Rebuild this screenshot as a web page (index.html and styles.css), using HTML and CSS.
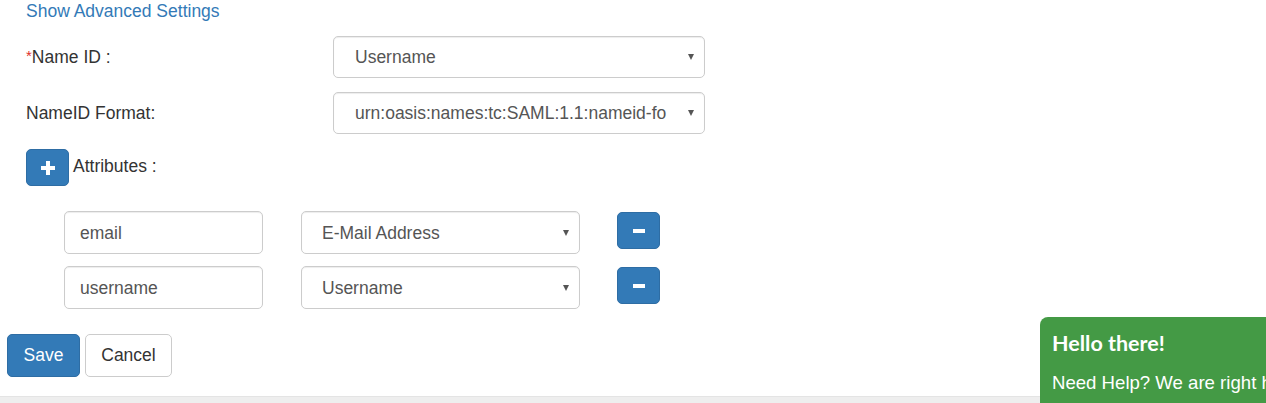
FILE: index.html
```html
<!DOCTYPE html>
<html>
<head>
<meta charset="utf-8">
<link rel="stylesheet" href="styles.css">
</head>
<body>
<div class="page">
  <div class="advanced"><a href="#">Show Advanced Settings</a></div>

  <div class="form-row first">
    <label class="label"><span class="req">*</span>Name ID :</label>
    <div class="select-wrap wide">
      <select class="select"><option>Username</option></select>
    </div>
  </div>

  <div class="form-row second">
    <label class="label">NameID Format:</label>
    <div class="select-wrap wide">
      <select class="select"><option>urn:oasis:names:tc:SAML:1.1:nameid-fo</option></select>
    </div>
  </div>

  <div class="attr-head">
    <button class="btn-icon" type="button">
      <svg width="14" height="14" viewBox="0 0 14 14"><rect x="5" y="0" width="4" height="14" fill="#fff"/><rect x="0" y="5" width="14" height="4" fill="#fff"/></svg>
    </button>
    <span class="attr-label">Attributes :</span>
  </div>

  <div class="attr-list">
    <div class="attr-row">
      <input class="input" type="text" value="email">
      <div class="select-wrap narrow">
        <select class="select sm"><option>E-Mail Address</option></select>
      </div>
      <button class="btn-icon minus" type="button">
        <svg width="12" height="4" viewBox="0 0 12 4"><rect x="0" y="0" width="12" height="4" fill="#fff"/></svg>
      </button>
    </div>
    <div class="attr-row">
      <input class="input" type="text" value="username">
      <div class="select-wrap narrow">
        <select class="select sm"><option>Username</option></select>
      </div>
      <button class="btn-icon minus" type="button">
        <svg width="12" height="4" viewBox="0 0 12 4"><rect x="0" y="0" width="12" height="4" fill="#fff"/></svg>
      </button>
    </div>
  </div>

  <div class="actions">
    <button class="btn btn-primary" type="button">Save</button>
    <button class="btn btn-default" type="button">Cancel</button>
  </div>

  <div class="footer-band"></div>
</div>

<div class="chat">
  <div class="chat-title">Hello there!</div>
  <div class="chat-text">Need Help? We are right here!</div>
</div>
</body>
</html>
```

FILE: styles.css
```css
html, body {
  margin: 0;
  padding: 0;
  background: #fff;
  overflow: hidden;
}

body {
  font-family: "Liberation Sans", Arial, sans-serif;
  font-size: 17.5px;
  color: #333;
  height: 403px;
}

.page {
  display: flex;
  flex-direction: column;
}

.advanced {
  padding-left: 26px;
  height: 22px;
  line-height: 22px;
}

.advanced a {
  color: #337ab7;
  text-decoration: none;
}

.form-row {
  display: flex;
  align-items: center;
  padding-left: 26px;
  height: 42px;
}

.form-row.first { margin-top: 14px; }
.form-row.second { margin-top: 14px; }

.label {
  width: 307px;
  flex: none;
}

.req {
  color: #e0302b;
  font-size: 15px;
  vertical-align: 2px;
}

.select-wrap {
  position: relative;
  height: 100%;
  flex: none;
}

.select-wrap::after {
  content: "";
  position: absolute;
  right: 11px;
  top: 50%;
  margin-top: -3px;
  width: 0;
  height: 0;
  border-left: 3.5px solid transparent;
  border-right: 3.5px solid transparent;
  border-top: 6px solid #555;
  pointer-events: none;
}

.select-wrap.wide { width: 372px; }
.select-wrap.narrow { width: 279px; height: 43px; }

.select {
  -webkit-appearance: none;
  appearance: none;
  width: 100%;
  height: 100%;
  box-sizing: border-box;
  border: 1px solid #ccc;
  border-radius: 5px;
  background: #fff;
  font-family: "Liberation Sans", Arial, sans-serif;
  font-size: 17.5px;
  color: #555;
  padding: 0 30px 0 21px;
  box-shadow: inset 0 1px 1px rgba(0,0,0,0.075);
  outline: none;
}

.select.sm { padding-left: 20px; }

.attr-head {
  display: flex;
  align-items: center;
  padding-left: 26px;
  margin-top: 15px;
  height: 37px;
}

.btn-icon {
  width: 43px;
  height: 37px;
  box-sizing: border-box;
  background: #337ab7;
  border: 1px solid #2e6da4;
  border-radius: 5px;
  padding: 0;
  display: flex;
  align-items: center;
  justify-content: center;
  flex: none;
}

.attr-label {
  margin-left: 4px;
  margin-top: -3px;
}

.attr-list {
  display: flex;
  flex-direction: column;
  gap: 12px;
  margin-top: 25px;
  padding-left: 64px;
}

.attr-row {
  display: flex;
  align-items: flex-start;
  height: 43px;
}

.input {
  width: 199px;
  height: 43px;
  box-sizing: border-box;
  border: 1px solid #ccc;
  border-radius: 5px;
  font-family: "Liberation Sans", Arial, sans-serif;
  font-size: 17.5px;
  color: #555;
  padding: 1px 15px 0;
  margin-right: 38px;
  box-shadow: inset 0 1px 1px rgba(0,0,0,0.075);
  outline: none;
}

.minus {
  margin-left: 37px;
  margin-top: 1px;
}

.actions {
  display: flex;
  gap: 5px;
  padding-left: 7px;
  margin-top: 25px;
}

.btn {
  height: 43px;
  box-sizing: border-box;
  border-radius: 5px;
  font-family: "Liberation Sans", Arial, sans-serif;
  font-size: 17.5px;
  padding: 0 15px;
}

.btn-primary {
  width: 73px;
  background: #337ab7;
  border: 1px solid #2e6da4;
  color: #fff;
}

.btn-default {
  width: 87px;
  background: #fff;
  border: 1px solid #ccc;
  color: #333;
}

.footer-band {
  margin-top: 19px;
  height: 20px;
  background: #eeeeee;
  border-top: 1px solid #e4e4e4;
}

.chat {
  position: fixed;
  left: 1040px;
  top: 317px;
  width: 280px;
  height: 120px;
  background: #449a45;
  border-radius: 8px 0 0 0;
  color: #fff;
  padding: 0 12px;
  box-sizing: border-box;
  white-space: nowrap;
}

.chat-title {
  font-family: Lato, "Open Sans", sans-serif;
  font-weight: 700;
  font-size: 21.5px;
  margin-top: 13px;
  line-height: 27px;
}

.chat-text {
  font-family: "Liberation Sans", Arial, sans-serif;
  font-size: 18.6px;
  margin-top: 14px;
  line-height: 24px;
}
```
